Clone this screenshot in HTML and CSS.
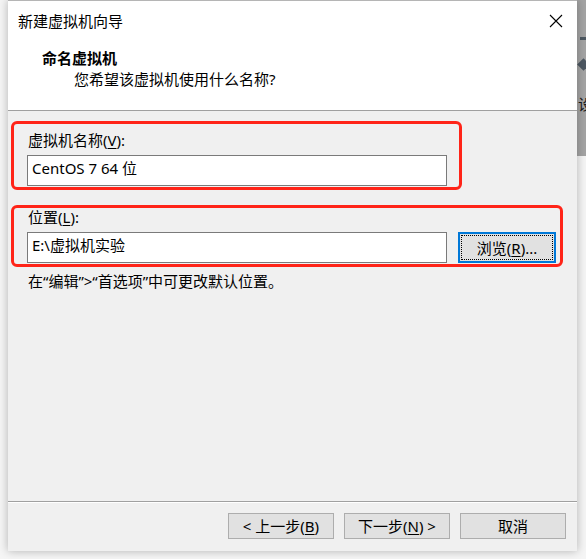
FILE: index.html
```html
<!DOCTYPE html>
<html lang="zh-CN">
<head>
<meta charset="utf-8">
<title>新建虚拟机向导</title>
<link rel="stylesheet" href="styles.css">
</head>
<body>
<div class="backdrop">
  <span class="bg-dash"></span>
  <span class="bg-diamond"></span>
  <span class="bg-char">设</span>
</div>
<div class="screen">
  <div class="dialog">
    <div class="top">
      <div class="titlebar">
        <span class="title">新建虚拟机向导</span>
        <svg class="close" width="14" height="14" viewBox="0 0 14 14"><path d="M1 1L13 13M13 1L1 13" stroke="#000" stroke-width="1.1" fill="none"/></svg>
      </div>
      <div class="header">
        <div class="h-title">命名虚拟机</div>
        <div class="h-sub">您希望该虚拟机使用什么名称?</div>
      </div>
    </div>
    <div class="sep-top"></div>
    <div class="body">
      <div class="mark mark-name">
        <div class="label">虚拟机名称(<u>V</u>):</div>
        <div class="input wide">CentOS 7 64 位</div>
      </div>
      <div class="mark mark-loc">
        <div class="label">位置(<u>L</u>):</div>
        <div class="row">
          <div class="input wide">E:\虚拟机实验</div>
          <div class="btn browse"><span class="focus">浏览(<u>R</u>)...</span></div>
        </div>
      </div>
      <div class="hint">在“编辑”&gt;“首选项”中可更改默认位置。</div>
    </div>
    <div class="sep-bottom"></div>
    <div class="footer">
      <div class="btn">&lt; 上一步(<u>B</u>)</div>
      <div class="btn">下一步(<u>N</u>) &gt;</div>
      <div class="btn">取消</div>
    </div>
  </div>
</div>
</body>
</html>
```

FILE: styles.css
```css
html, body {
  margin: 0;
  padding: 0;
}
body {
  width: 586px;
  height: 559px;
  overflow: hidden;
  position: relative;
  background: #f5f5f5;
  font-family: "Noto Sans", "Noto Sans CJK SC", sans-serif;
  font-size: 15px;
  color: #000;
}
.backdrop {
  position: absolute;
  right: 0;
  top: 0;
  width: 9px;
  height: 156px;
  background: #a4a4a4;
  overflow: hidden;
}
.bg-dash {
  position: absolute;
  left: 3px;
  top: 37px;
  width: 6px;
  height: 3px;
  background: #4d5862;
}
.bg-diamond {
  position: absolute;
  left: 2px;
  top: 60px;
  width: 9px;
  height: 9px;
  background: #4d5862;
  transform: rotate(45deg);
}
.bg-char {
  position: absolute;
  left: 1px;
  top: 94px;
  font-family: "Noto Sans CJK SC", sans-serif;
  font-size: 15px;
  line-height: 20px;
  color: #1a1a1a;
}
.screen {
  position: relative;
  padding-left: 8px;
}
.dialog {
  width: 569px;
  height: 551px;
  background: #f0f0f0;
  display: flex;
  flex-direction: column;
  box-shadow: 0 0 9px rgba(0, 0, 0, 0.28);
  border-top: 1px solid #b5b5b5;
  box-sizing: border-box;
}
.top {
  background: #fff;
  height: 109px;
}
.titlebar {
  height: 39px;
  display: flex;
  align-items: center;
  justify-content: space-between;
  padding: 0 14px 0 10px;
}
.title {
  line-height: 20px;
}
.close {
  display: block;
}
.header {
  padding-top: 8px;
}
.h-title {
  padding-left: 34px;
  font-weight: bold;
  line-height: 20px;
}
.h-sub {
  padding-left: 66px;
  line-height: 22px;
}
.sep-top {
  height: 1px;
  background: #a0a0a0;
}
.body {
  flex: 1;
  padding: 10px 0 0 3px;
}
.mark {
  border: 3px solid #ff2418;
  border-radius: 6px;
  box-sizing: border-box;
}
.mark-name {
  width: 451px;
  padding: 8px 12px 1px 13px;
}
.mark-loc {
  margin-top: 15px;
  width: 552px;
  padding: 1px 4px 1px 13px;
}
.label {
  line-height: 16px;
  padding-left: 1px;
  margin-bottom: 7px;
}
.input {
  height: 31px;
  box-sizing: border-box;
  border: 1px solid #7a7a7a;
  background: #fff;
  padding: 2px 4px;
  line-height: 20px;
}
.wide {
  width: 420px;
}
.row {
  display: flex;
  gap: 11px;
  align-items: flex-start;
}
.btn {
  width: 106px;
  height: 26px;
  box-sizing: border-box;
  background: #e1e1e1;
  border: 1px solid #adadad;
  display: flex;
  align-items: center;
  justify-content: center;
  line-height: 20px;
}
.browse {
  width: 98px;
  height: 31px;
  border: 2px solid #0078d7;
  padding: 1px;
}
.focus {
  flex: 1;
  align-self: stretch;
  border: 1px dotted #000;
  display: flex;
  align-items: center;
  justify-content: center;
}
.hint {
  margin-top: 6px;
  padding-left: 17px;
  line-height: 16px;
}
.sep-bottom {
  height: 1px;
  background: #a0a0a0;
  border-bottom: 1px solid #fff;
}
.footer {
  height: 48px;
  display: flex;
  gap: 10px;
  padding: 10px 0 0 220px;
  box-sizing: border-box;
}
u {
  text-decoration: underline;
  text-underline-offset: 2px;
}
```
